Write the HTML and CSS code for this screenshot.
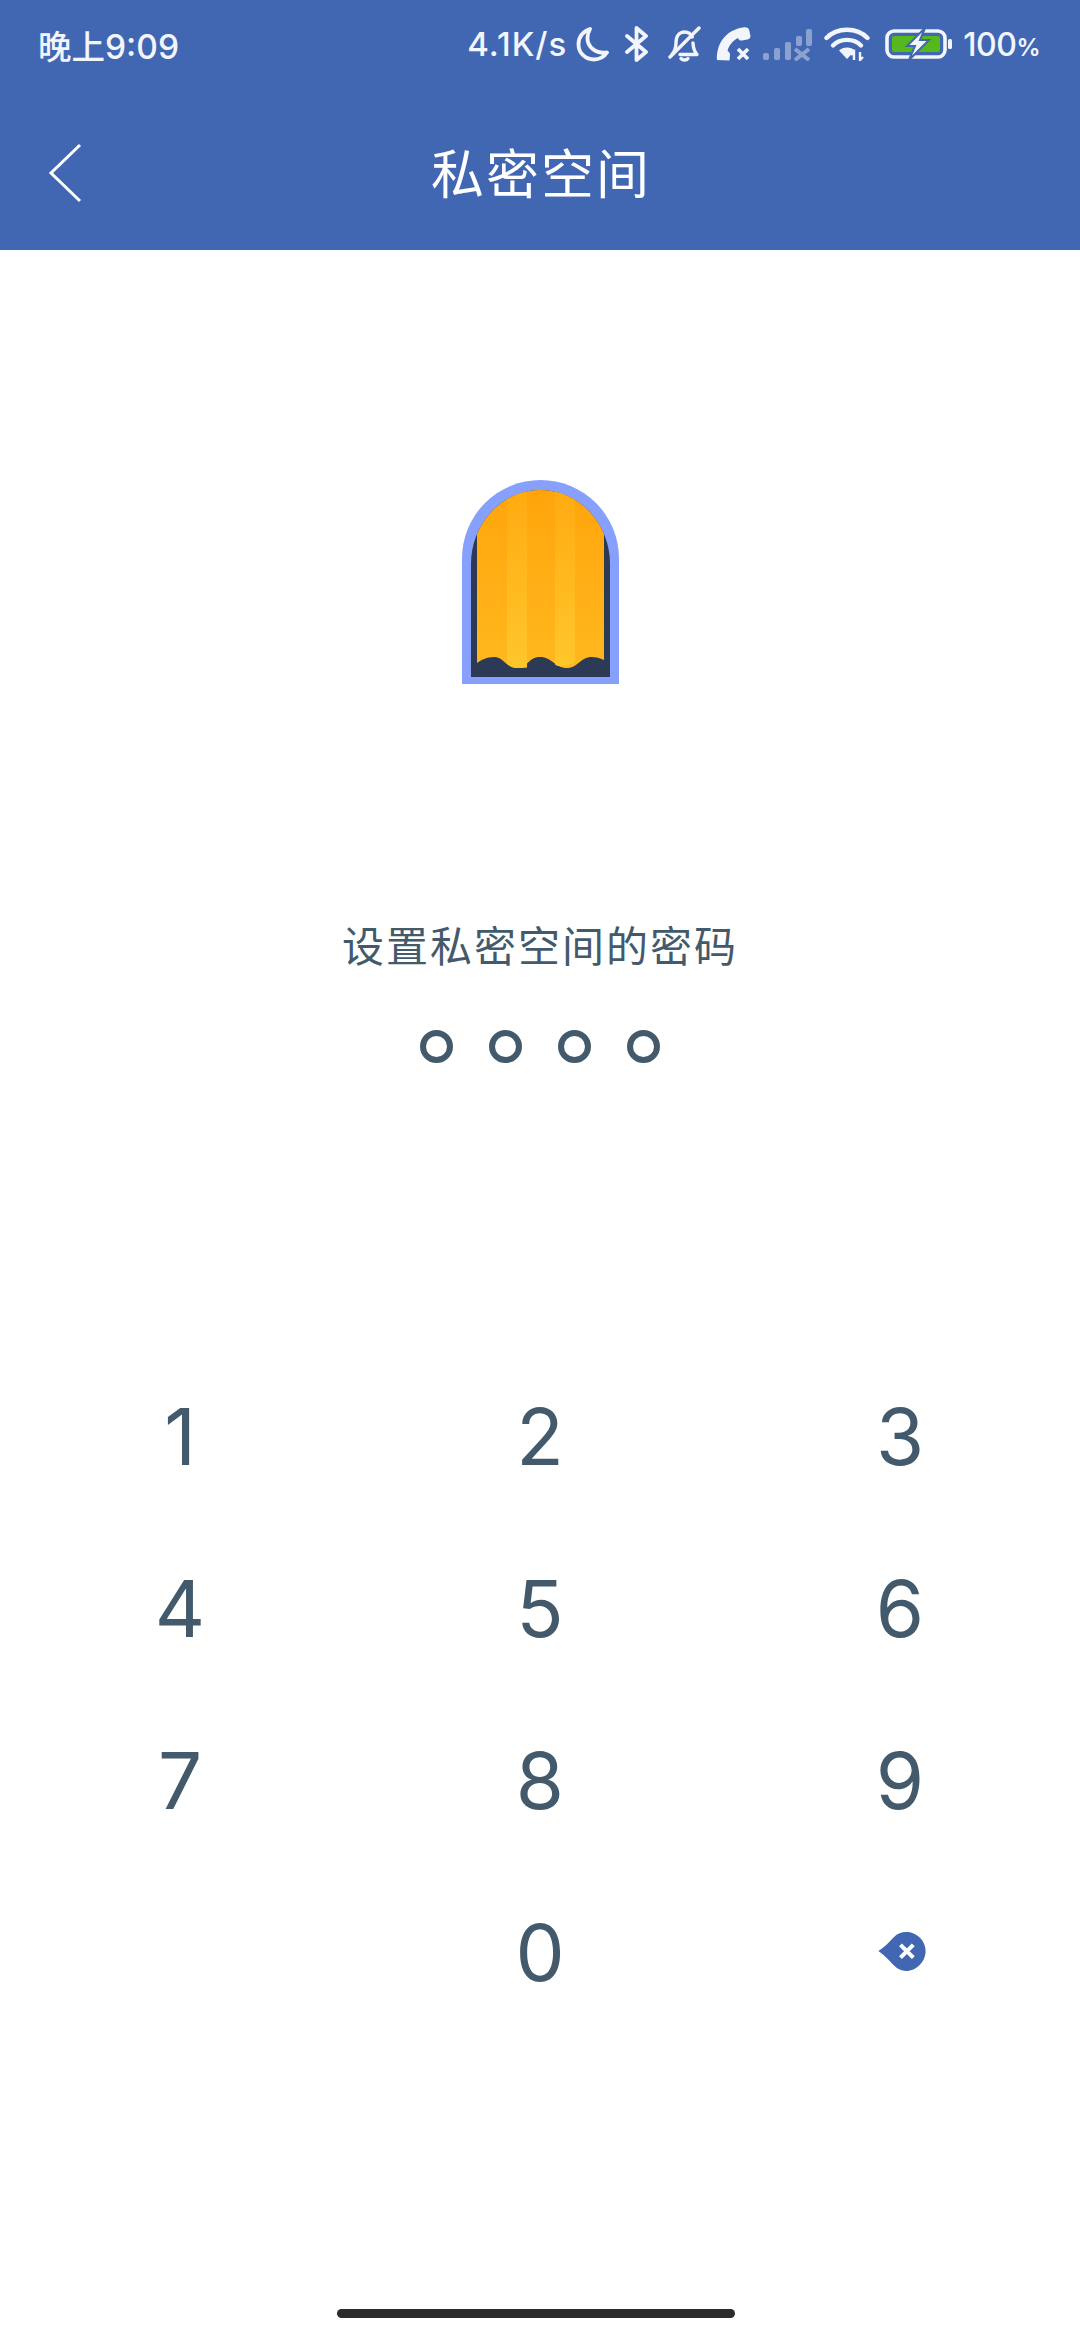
FILE: index.html
```html
<!DOCTYPE html>
<html lang="zh-CN">
<head>
  <meta charset="UTF-8">
  <meta name="viewport" content="width=device-width, initial-scale=1.0">
  <title>私密空间</title>
  <link rel="stylesheet" href="styles.css">
</head>
<body>
  <header class="top">
    <div class="status">
      <span class="clock">晚上9:09</span>
      <div class="status-right">
        <span class="speed">4.1K/s</span>
        <svg class="ico ico-moon" viewBox="0 0 33 36"><path d="M14 3C6 6 2.500 12 2.500 18.500 2.500 27 9.500 33.500 18 33.500 23.500 33.500 28 31 31 26.500 20 28 11 21 11.500 11.500 11.700 8.500 12.500 5.500 14 3Z" fill="none" stroke="#f2f5fb" stroke-width="3.800" stroke-linejoin="round"/></svg>
        <svg class="ico ico-bt" viewBox="0 0 26 36"><path d="M3 10L22 26 12.500 34V2L22 10 3 26" fill="none" stroke="#f2f5fb" stroke-width="3.800" stroke-linejoin="round" stroke-linecap="round"/></svg>
        <svg class="ico ico-bell" viewBox="0 0 33 36"><path d="M4 28.500C7 25 8 22 8 17 8 10 11.500 6 16.500 6 20 6 23 8 24.300 11M25 17C25.200 22 26 25 29 28.500H12M13 32.500C14.500 34.500 18.500 34.500 20 32.500" fill="none" stroke="#f2f5fb" stroke-width="3.400" stroke-linecap="round" stroke-linejoin="round"/><path d="M2 31L31 2" stroke="#f2f5fb" stroke-width="3.400" stroke-linecap="round"/></svg>
        <svg class="ico ico-phone" viewBox="0 0 35 34"><path d="M1 33C0 18 9 3 27 0.500 30 0 32 0.500 33 2.500L34.500 9C34.500 11 33.500 12 31.500 12.500L26 13.500C24 13.800 23 13 22 11 17 13.500 13 18 11.500 24 13.500 25 14 26 14 28L13.500 33.500 Z" fill="#f2f5fb"/><path d="M22 22L32 32M32 22L22 32" stroke="#f2f5fb" stroke-width="3.600"/></svg>
        <svg class="ico ico-signal" viewBox="0 0 49 33"><g fill="#f2f5fb" opacity=".42"><rect x="0" y="25" width="6" height="7" rx="2"/><rect x="11" y="20" width="6" height="12" rx="2"/><rect x="22" y="14" width="6" height="18" rx="2"/><rect x="33" y="8" width="6" height="10" rx="2"/><rect x="43" y="1" width="6" height="17" rx="2"/><path d="M32 21L46 32M46 21L32 32" stroke="#f2f5fb" stroke-width="4"/></g></svg>
        <svg class="ico ico-wifi" viewBox="0 0 46 34"><g fill="none" stroke="#f2f5fb" stroke-width="4.400" stroke-linecap="round"><path d="M2.500 11C13 0 33 0 43.500 11"/><path d="M9 18.500C16 11 30 11 37 18.500"/></g><path d="M15 23.500C19 19.500 27 19.500 31 23.500L23 32Z" fill="#f2f5fb"/><path d="M30 33V25L27 28M36 25V33L39 30" fill="none" stroke="#f2f5fb" stroke-width="2.400"/></svg>
        <svg class="ico ico-battery" viewBox="0 0 68 32"><rect x="2" y="3" width="58" height="26" rx="7" fill="none" stroke="#f2f5fb" stroke-width="3.600"/><rect x="7" y="8" width="48" height="16" rx="2" fill="#57b81c"/><rect x="63" y="11" width="4" height="10" rx="1.500" fill="#f2f5fb"/><path d="M40 0L22 18H30L24 32 44 12H35Z" fill="#f2f5fb" stroke="#4167b3" stroke-width="2"/></svg>
        <span class="level">100<small>%</small></span>
      </div>
    </div>
    <nav class="bar">
      <svg class="back" viewBox="0 0 34 60"><path d="M32 2L3 30 32 58" fill="none" stroke="#fff" stroke-width="3"/></svg>
      <h1>私密空间</h1>
    </nav>
  </header>

  <main class="lock">
    <svg class="door" viewBox="0 0 157 204">
      <defs>
        <linearGradient id="cloth" x1="0" y1="0" x2="0" y2="1">
          <stop offset="0" stop-color="#ffa40a"/>
          <stop offset="1" stop-color="#ffb81e"/>
        </linearGradient>
        <linearGradient id="fold" x1="0" y1="0" x2="0" y2="1">
          <stop offset="0" stop-color="#ffa90f"/>
          <stop offset="1" stop-color="#ffc62c"/>
        </linearGradient>
        <clipPath id="arch"><path d="M9 197V84A69.500 74 0 0 1 148 84V197Z"/></clipPath>
      </defs>
      <path d="M0 204V78.500A78.500 78.500 0 0 1 157 78.500V204Z" fill="#87a0fb"/>
      <path d="M9 197V84A69.500 74 0 0 1 148 84V197Z" fill="#2d3a55"/>
      <g clip-path="url(#arch)">
        <path d="M15 0H142V180C138 178 134 177 130 177 118 177 116 188 105 188 93 188 90 177 78 177 66 177 66 188 55 188 44 188 42 177 32 177 25 177 19 180 15 183Z" fill="url(#cloth)"/>
        <path d="M45 0H65V187.500C60 188.500 50 188 45 183.500Z" fill="url(#fold)"/>
        <path d="M93 0H113V181C110 185 100 189 93 184.500Z" fill="url(#fold)"/>
      </g>
    </svg>

    <p class="hint">设置私密空间的密码</p>
    <div class="dots">
      <span class="dot"></span>
      <span class="dot"></span>
      <span class="dot"></span>
      <span class="dot"></span>
    </div>

    <div class="keys">
      <button class="key">1</button>
      <button class="key">2</button>
      <button class="key">3</button>
      <button class="key">4</button>
      <button class="key">5</button>
      <button class="key">6</button>
      <button class="key">7</button>
      <button class="key">8</button>
      <button class="key">9</button>
      <span class="key"></span>
      <button class="key">0</button>
      <button class="key">
        <svg class="del" viewBox="0 0 46 38"><path d="M0 18.500C7 14 11 9 15 5 18.500 1.500 22.500 0 27 0 37 0 46 8 46 18.500 46 29 37 38 27 38 22.500 38 18.500 36 15 32.500 11 28.500 7 23.500 0 18.500Z" fill="#4167b3"/><path d="M21.500 12.500L34 25M34 12.500L21.500 25" stroke="#fff" stroke-width="4"/></svg>
      </button>
    </div>
  </main>

  <div class="home-bar"></div>
</body>
</html>
```

FILE: styles.css
```css
* {
  box-sizing: border-box;
}
html, body {
  margin: 0;
  padding: 0;
}
body {
  position: relative;
  width: 1080px;
  height: 2340px;
  overflow: hidden;
  background-color: #fff;
  font-family: Inter, "Noto Sans CJK SC", sans-serif;
}
.top {
  height: 250px;
  background-color: #4167b3;
  color: #fff;
}
.status {
  height: 88px;
  padding: 0 40px 0 38px;
  display: flex;
  align-items: center;
  justify-content: space-between;
  color: #f2f5fb;
}
.clock {
  font-size: 33.500px;
  font-weight: 500;
}
.status-right {
  display: flex;
  align-items: center;
}
.speed {
  font-size: 33px;
  font-weight: 500;
  letter-spacing: 1px;
}
.level {
  margin-left: 10px;
  font-size: 32px;
  font-weight: 500;
  letter-spacing: -0.500px;
}
.level small {
  font-size: 24px;
  font-weight: 600;
}
.ico {
  display: block;
}
.ico-moon {
  width: 33px;
  height: 36px;
  margin-left: 9px;
}
.ico-bt {
  width: 26px;
  height: 36px;
  margin-left: 15px;
}
.ico-bell {
  width: 33px;
  height: 36px;
  margin-left: 18px;
}
.ico-phone {
  width: 35px;
  height: 34px;
  margin-left: 15px;
}
.ico-signal {
  width: 49px;
  height: 33px;
  margin-left: 12px;
}
.ico-wifi {
  width: 46px;
  height: 34px;
  margin-left: 12px;
}
.ico-battery {
  width: 68px;
  height: 32px;
  margin-left: 15px;
}
.bar {
  height: 162px;
  padding: 3px 0 0 2px;
  display: flex;
  align-items: center;
  justify-content: center;
  position: relative;
}
.bar h1 {
  margin: 0;
  font-size: 53px;
  font-weight: 400;
  letter-spacing: 2px;
}
.back {
  position: absolute;
  left: 48px;
  top: 55px;
  width: 34px;
  height: 60px;
}
.lock {
  display: flex;
  flex-direction: column;
  align-items: center;
}
.door {
  display: block;
  width: 157px;
  height: 204px;
  margin-top: 230px;
}
.hint {
  margin: 233px 0 0;
  font-size: 42px;
  line-height: 60px;
  letter-spacing: 2px;
  color: #435a6c;
}
.dots {
  display: flex;
  gap: 36px;
  margin-top: 53px;
}
.dot {
  width: 33px;
  height: 33px;
  border: 6.500px solid #435a6c;
  border-radius: 50%;
}
.keys {
  display: grid;
  grid-template-columns: repeat(3, 360px);
  grid-auto-rows: 172px;
  margin-top: 287px;
}
.key {
  display: flex;
  align-items: center;
  justify-content: center;
  padding: 0;
  border: none;
  background: none;
  font-family: inherit;
  font-size: 78px;
  color: #435a6c;
}
.del {
  display: block;
  width: 48px;
  height: 39px;
  margin: 0 0 2px 3px;
}
.home-bar {
  position: absolute;
  left: 337px;
  top: 2309px;
  width: 398px;
  height: 9px;
  border-radius: 5px;
  background-color: #2b2b2b;
}
```
